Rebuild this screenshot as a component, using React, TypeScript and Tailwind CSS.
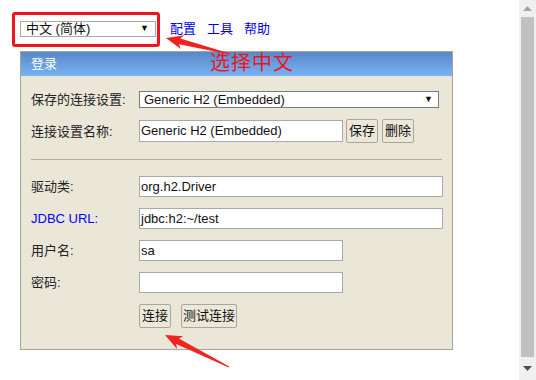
import React from 'react';

const font = { fontFamily: '"Liberation Sans", "Noto Sans CJK SC", sans-serif' };

const Label = ({ children, blue = false }: { children: React.ReactNode; blue?: boolean }) => (
  <div className={`w-[108px] shrink-0 text-[13px] leading-none ${blue ? 'text-[#0000ff]' : 'text-[#222]'}`}>{children}</div>
);

const TextBox = ({ value, wide = false }: { value: string; wide?: boolean }) => (
  <div
    className={`${wide ? 'w-[304px]' : 'w-[204px]'} h-[21px] border border-[#a9a9a9] bg-white flex items-center pl-[1px] text-[13px] text-[#111]`}
  >
    {value}
  </div>
);

const Btn = ({ children, w }: { children: React.ReactNode; w: string }) => (
  <div
    className={`${w} h-[24px] border border-[#aaa79a] rounded-[2px] bg-[#ebe8da] flex items-center justify-center text-[13px] text-[#111]`}
  >
    {children}
  </div>
);

export default function App() {
  return (
    <div className="relative w-[536px] h-[380px] bg-white overflow-hidden flex" style={font}>
      <div className="w-[519px] h-full pl-[20px] pt-[21px]">
        {/* top bar */}
        <div className="flex items-center h-[16px]">
          <div className="w-[136px] h-[16px] border border-[#a9a9a9] bg-white flex items-center justify-between pl-[5px] pr-[6px] text-[13px] text-[#111]">
            <span>中文 (简体)</span>
            <span className="text-[9px]">▼</span>
          </div>
          <div className="flex gap-[11px] ml-[14px] text-[13px] text-[#0000ee]">
            <span>配置</span>
            <span>工具</span>
            <span>帮助</span>
          </div>
        </div>

        {/* login panel */}
        <div className="mt-[14px] w-[433px] h-[299px] border border-[#a8a597] bg-[#ebe7d8]">
          <div className="h-[24px] bg-gradient-to-b from-[#5a87c8] to-[#78b4f4] flex items-center pl-[10px] text-[13px] text-white">
            登录
          </div>
          <div className="pl-[10px] flex flex-col">
            <div className="flex items-center h-[17px] mt-[15px]">
              <Label>保存的连接设置:</Label>
              <div className="w-[300px] h-[17px] border border-[#7a7a7a] bg-white flex items-center justify-between pl-[4px] pr-[5px] text-[13px] text-[#111]">
                <span>Generic H2 (Embedded)</span>
                <span className="text-[9px]">▼</span>
              </div>
            </div>
            <div className="flex items-center h-[24px] mt-[11px]">
              <Label>连接设置名称:</Label>
              <div className="w-[204px] h-[22px] border border-[#a9a9a9] bg-white flex items-center pl-[1px] text-[13px] text-[#111]">
                Generic H2 (Embedded)
              </div>
              <div className="ml-[3px]">
                <Btn w="w-[32px]">保存</Btn>
              </div>
              <div className="ml-[4px]">
                <Btn w="w-[32px]">删除</Btn>
              </div>
            </div>
            <div className="mt-[16px] w-[411px] h-[1px] bg-[#aeab9f]" />
            <div className="flex items-center mt-[16px]">
              <Label>驱动类:</Label>
              <TextBox value="org.h2.Driver" wide />
            </div>
            <div className="flex items-center mt-[11px]">
              <Label blue>JDBC URL:</Label>
              <TextBox value="jdbc:h2:~/test" wide />
            </div>
            <div className="flex items-center mt-[11px]">
              <Label>用户名:</Label>
              <TextBox value="sa" />
            </div>
            <div className="flex items-center mt-[11px]">
              <Label>密码:</Label>
              <TextBox value="" />
            </div>
            <div className="flex items-center mt-[11px] pl-[108px] gap-[10px]">
              <Btn w="w-[32px]">连接</Btn>
              <Btn w="w-[56px]">测试连接</Btn>
            </div>
          </div>
        </div>
      </div>

      {/* scrollbar */}
      <div className="w-[17px] h-full bg-[#f0f0f0] flex flex-col items-center">
        <div className="h-[17px] flex items-center justify-center">
          <svg width="9" height="5" viewBox="0 0 9 5">
            <polygon points="0,5 9,5 4.5,0" fill="#a3a3a3" />
          </svg>
        </div>
        <div className="w-[13px] h-[340px] bg-[#c1c1c1]" />
        <div className="flex-1 flex items-center justify-center">
          <svg width="9" height="5" viewBox="0 0 9 5">
            <polygon points="0,0 9,0 4.5,5" fill="#505050" />
          </svg>
        </div>
      </div>

      {/* annotations */}
      <div className="absolute left-[12px] top-[12px] w-[148px] h-[35px] border-[3px] border-[#f0141e] rounded-[3px]" />
      <div className="absolute left-[210px] top-[53px] text-[20px] leading-none text-[#f0141e] tracking-[1px]">
        选择中文
      </div>
      <svg className="absolute left-0 top-0" width="536" height="380" viewBox="0 0 536 380">
        <polygon
          points="166,38 184.2,35.3 180.3,38.5 229.9,53.5 230.1,54.5 178.9,44.3 180.8,48.9"
          fill="#f0231e"
        />
        <polygon
          points="165,335 183.3,336.3 178.8,338.6 229.2,366.6 228.8,367.4 176.2,344 177.1,348.9"
          fill="#f0231e"
        />
      </svg>
    </div>
  );
}
